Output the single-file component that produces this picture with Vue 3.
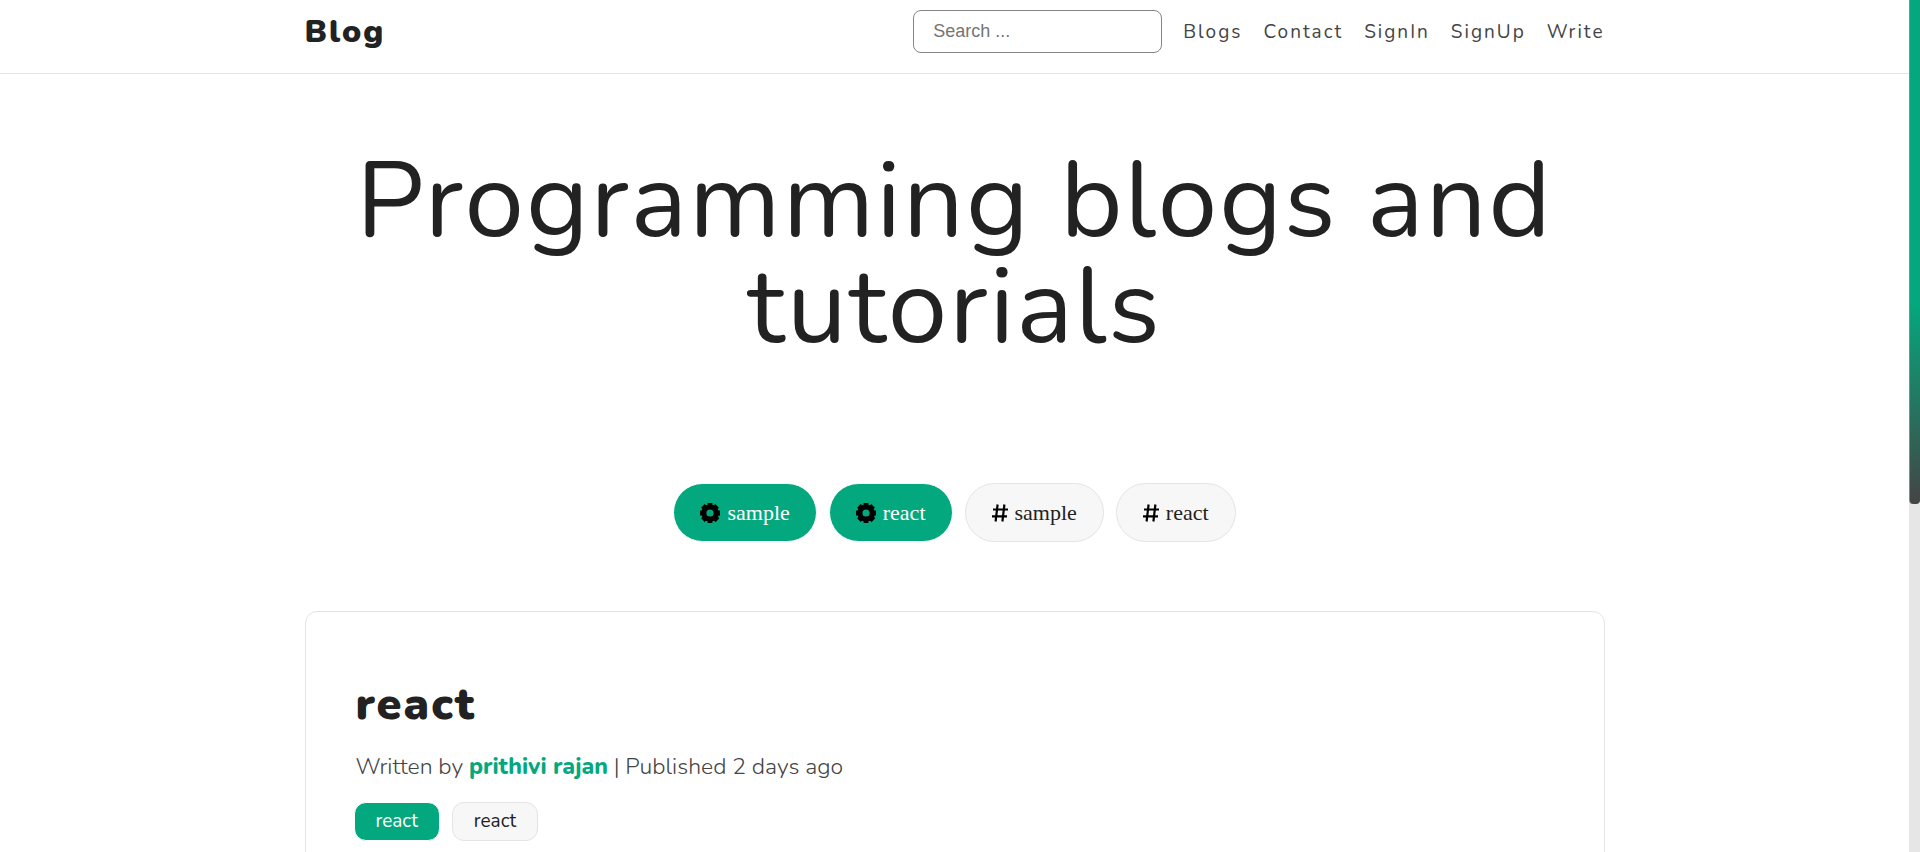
<script setup>
const links = ['Blogs', 'Contact', 'SignIn', 'SignUp', 'Write']
const categories = ['sample', 'react']
const tags = ['sample', 'react']
</script>

<template>
  <div class="shell">
    <div class="page">
      <header class="header">
        <div class="container bar">
          <a class="brand" href="#">Blog</a>
          <nav class="nav">
            <input class="search" type="search" placeholder="Search ..." aria-label="Search" />
            <a v-for="link in links" :key="link" class="link" href="#">{{ link }}</a>
          </nav>
        </div>
      </header>

      <main class="container">
        <h1 class="title">Programming blogs and tutorials</h1>

        <div class="pills">
          <a v-for="name in categories" :key="'c-' + name" class="pill green" href="#">
            <svg class="gear" viewBox="0 0 20 20" aria-hidden="true">
              <path
                fill-rule="evenodd"
                d="M7.6 0h4.8v1.7l1.6.6 1.3-1.2 3.6 3.6-1.2 1.3.6 1.6H20v4.8h-1.3l-.6 1.6 1.2 1.3-3.6 3.6-1.7-1.2-1.6.6V20H7.6v-1.7L6 17.7l-1.3 1.2-3.6-3.6L2.3 14l-.6-1.6H0V7.6h1.7L2.3 6 1.1 4.7l3.6-3.6L6 2.3l1.6-.6zM10 6.4a3.6 3.6 0 1 0 0 7.2 3.6 3.6 0 0 0 0-7.2z"
              />
            </svg>
            <span>{{ name }}</span>
          </a>
          <a v-for="name in tags" :key="'t-' + name" class="pill" href="#">
            <svg class="hash" viewBox="0 0 16 18" aria-hidden="true">
              <path d="M5.6 0.5L3.6 17.5M12.4 0.5L10.4 17.5M1 5.5H16M0 12.3H15" fill="none" stroke="#000" stroke-width="2.2" />
            </svg>
            <span>{{ name }}</span>
          </a>
        </div>

        <article class="card">
          <h2 class="post">react</h2>
          <p class="byline">
            Written by <a class="author" href="#">prithivi rajan</a> | Published 2 days ago
          </p>
          <div class="chips">
            <a class="chip green" href="#">react</a>
            <a class="chip" href="#">react</a>
          </div>
        </article>
      </main>
    </div>
    <div class="track" aria-hidden="true"><div class="thumb"></div></div>
  </div>
</template>

<style>
body {
  margin: 0;
  background: #fff;
}
</style>

<style scoped>
.shell {
  display: flex;
  height: 100vh;
  overflow: hidden;
  font-family: Nunito, Inter, sans-serif;
  color: #222;
}
.page {
  flex: 1;
  min-width: 0;
}
a {
  color: inherit;
  text-decoration: none;
}
.container {
  box-sizing: border-box;
  width: 100%;
  max-width: 1300px;
  margin: 0 auto;
}
.header {
  border-bottom: 1px solid #e4e4e4;
}
.bar {
  display: flex;
  align-items: center;
  justify-content: space-between;
  padding: 10px 0 20px;
}
.brand {
  font-size: 32px;
  line-height: 40px;
  font-weight: 900;
  letter-spacing: 2px;
}
.nav {
  display: flex;
  align-items: center;
  gap: 21px;
}
.search {
  box-sizing: border-box;
  width: 249px;
  height: 43px;
  padding: 0 19px;
  border: 1px solid #858585;
  border-radius: 8px;
  background: #fff;
  font: 18px 'Liberation Sans', Arial, sans-serif;
}
.search::placeholder {
  color: #757575;
}
.link {
  font-size: 19px;
  line-height: 28px;
  font-weight: 400;
  letter-spacing: 2px;
  color: #444;
}
.title {
  margin: 74px 0 0;
  font-size: 107px;
  line-height: 106px;
  font-weight: 400;
  letter-spacing: 2px;
  text-align: center;
}
.pills {
  display: flex;
  justify-content: center;
  gap: 12px;
  margin-top: 123px;
}
.pill {
  display: flex;
  align-items: center;
  gap: 7px;
  padding: 16px 26px;
  border: 1px solid #e4e4e4;
  border-radius: 30px;
  background: #f7f7f7;
  font-family: 'Liberation Serif', serif;
  font-size: 22px;
  line-height: 25px;
}
.pill.green {
  border-color: #fff;
}
.green {
  background: #04a87e;
  color: #fff;
}
.gear {
  width: 20px;
  height: 20px;
  fill: #000;
}
.hash {
  width: 16px;
  height: 18px;
}
.card {
  margin-top: 69px;
  padding: 63px 50px;
  border: 1px solid #e4e4e4;
  border-radius: 12px;
}
.post {
  margin: 0;
  font-size: 45px;
  line-height: 60px;
  font-weight: 900;
  letter-spacing: 2px;
}
.byline {
  margin: 16px 0 0;
  font-size: 23px;
  line-height: 32px;
  font-weight: 300;
  color: #444;
}
.author {
  color: #04a87e;
  font-weight: 800;
}
.chips {
  display: flex;
  gap: 12px;
  margin: 19px -2px 0;
}
.chip {
  padding: 4px 21px;
  border: 1px solid #e4e4e4;
  border-radius: 12px;
  background: #f7f7f7;
  font-size: 19px;
  line-height: 29px;
}
.chip.green {
  background: #04a87e;
  border-color: #fff;
}
.track {
  width: 11px;
  background: #e6e6e6;
}
.thumb {
  box-sizing: border-box;
  height: 59.2%;
  border-left: 1px solid #8b8b8b;
  border-radius: 0 0 4px 4px;
  background: linear-gradient(#04a87e 60%, #444);
}
</style>
